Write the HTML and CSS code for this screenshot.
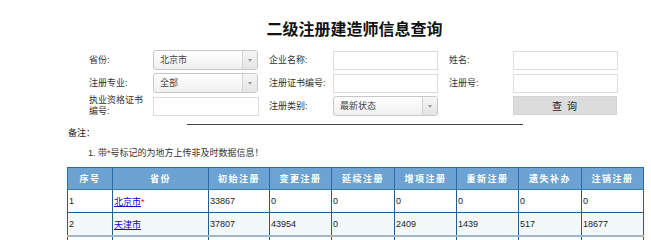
FILE: index.html
```html
<!DOCTYPE html>
<html lang="zh">
<head>
<meta charset="utf-8">
<title>二级注册建造师信息查询</title>
<link rel="stylesheet" href="styles.css">
</head>
<body>
<div class="page">
  <h1 class="title">二级注册建造师信息查询</h1>
  <div class="form">
    <label class="lbl">省份:</label>
    <div class="sel"><span class="sel-text">北京市</span><span class="sel-arrow"></span></div>
    <label class="lbl">企业名称:</label>
    <div class="inp"></div>
    <label class="lbl">姓名:</label>
    <div class="inp"></div>

    <label class="lbl">注册专业:</label>
    <div class="sel"><span class="sel-text">全部</span><span class="sel-arrow"></span></div>
    <label class="lbl">注册证书编号:</label>
    <div class="inp"></div>
    <label class="lbl">注册号:</label>
    <div class="inp"></div>

    <label class="lbl lbl-wrap">执业资格证书编号:</label>
    <div class="inp inp-wide"></div>
    <label class="lbl">注册类别:</label>
    <div class="sel"><span class="sel-text">最新状态</span><span class="sel-arrow"></span></div>
    <span></span>
    <button class="btn">查 询</button>
  </div>
  <div class="rule"></div>
  <p class="note">备注：</p>
  <p class="note-item">1. 带<span class="star">*</span>号标记的为地方上传非及时数据信息！</p>
  <table class="grid">
    <colgroup>
      <col style="width:45px"><col style="width:96px"><col style="width:61px"><col style="width:62px"><col style="width:63px"><col style="width:62px"><col style="width:62px"><col style="width:63px"><col style="width:62px">
    </colgroup>
    <thead>
      <tr><th>序号</th><th>省份</th><th>初始注册</th><th>变更注册</th><th>延续注册</th><th>增项注册</th><th>重新注册</th><th>遗失补办</th><th>注销注册</th></tr>
    </thead>
    <tbody>
      <tr><td>1</td><td><a href="#">北京市</a><span class="star">*</span></td><td>33867</td><td>0</td><td>0</td><td>0</td><td>0</td><td>0</td><td>0</td></tr>
      <tr class="alt"><td>2</td><td><a href="#">天津市</a></td><td>37807</td><td>43954</td><td>0</td><td>2409</td><td>1439</td><td>517</td><td>18677</td></tr>
      <tr class="next"><td></td><td></td><td></td><td></td><td></td><td></td><td></td><td></td><td></td></tr>
    </tbody>
  </table>
</div>
</body>
</html>
```

FILE: styles.css
```css
html, body {
  margin: 0;
  padding: 0;
  background: #fff;
}
body {
  font-family: "Liberation Sans", "Noto Sans CJK SC", sans-serif;
  font-size: 9px;
  color: #222;
}
.page {
  width: 651px;
  height: 240px;
  overflow: hidden;
}
.title {
  margin: 20px 0 0 0;
  padding-left: 58px;
  height: 20px;
  line-height: 20px;
  text-align: center;
  font-size: 16px;
  font-weight: bold;
  color: #111;
}
.form {
  margin: 10px 0 0 89px;
  display: grid;
  grid-template-columns: 64px 116px 64px 116px 64px 106px;
  grid-auto-rows: 20px;
  row-gap: 3px;
  align-items: center;
}
.lbl {
  color: #333;
  line-height: 11px;
}
.lbl-wrap {
  width: 60px;
  line-height: 11px;
}
.inp {
  width: 103px;
  height: 17px;
  border: 1px solid #dcdcdc;
  background: #fff;
}
.inp-wide {
  width: 104px;
}
.sel {
  box-sizing: border-box;
  width: 105px;
  height: 20px;
  border: 1px solid #c8c8c8;
  border-radius: 3px;
  background: linear-gradient(#ffffff, #f0f0f0);
  display: flex;
  align-items: stretch;
}
.sel-text {
  flex: 1;
  padding-left: 6px;
  line-height: 18px;
  color: #444;
}
.sel-arrow {
  width: 14px;
  border-left: 1px solid #d2d2d2;
  background: linear-gradient(#f6f6f6, #e4e4e4);
  border-radius: 0 2px 2px 0;
  display: flex;
  align-items: center;
  justify-content: center;
}
.sel-arrow::after {
  content: "";
  border-left: 2px solid transparent;
  border-right: 2px solid transparent;
  border-top: 3px solid #999;
}
.btn {
  width: 104px;
  height: 19px;
  margin: 0;
  padding: 0;
  border: 1px solid #d4d4d4;
  background: #dcdcdc;
  font-family: inherit;
  font-size: 10px;
  color: #222;
  letter-spacing: 1px;
  align-self: start;
}
.rule {
  width: 336px;
  height: 1px;
  margin: 8px 0 0 187px;
  background: #444;
}
.note {
  margin: 1px 0 0 68px;
  line-height: 14px;
  color: #222;
}
.note-item {
  margin: 6px 0 0 88px;
  line-height: 14px;
  color: #333;
}
.star {
  color: #e00;
}
.grid {
  margin: 7px 0 0 67px;
  width: 576px;
  table-layout: fixed;
  border-collapse: collapse;
  border: 1px solid #2b6ca6;
}
.grid th {
  height: 21px;
  padding: 0;
  background: #6da3d3;
  color: #fff;
  font-weight: bold;
  letter-spacing: 1.5px;
  text-align: center;
  border: 1px solid #2b6ca6;
  border-bottom: 1px solid #3d7ab0;
}
.grid td {
  height: 22px;
  padding: 0 0 0 1px;
  text-align: left;
  color: #222;
  border: 1px solid #1f5d92;
  border-top: 1px solid #2a6aa0;
}
.grid tr.alt td {
  background: #f3f8fa;
}
.grid tr.next td {
  border-top: 2px solid #9bb8cc;
}
.grid a {
  color: #2200cc;
  text-decoration: underline;
}
```
